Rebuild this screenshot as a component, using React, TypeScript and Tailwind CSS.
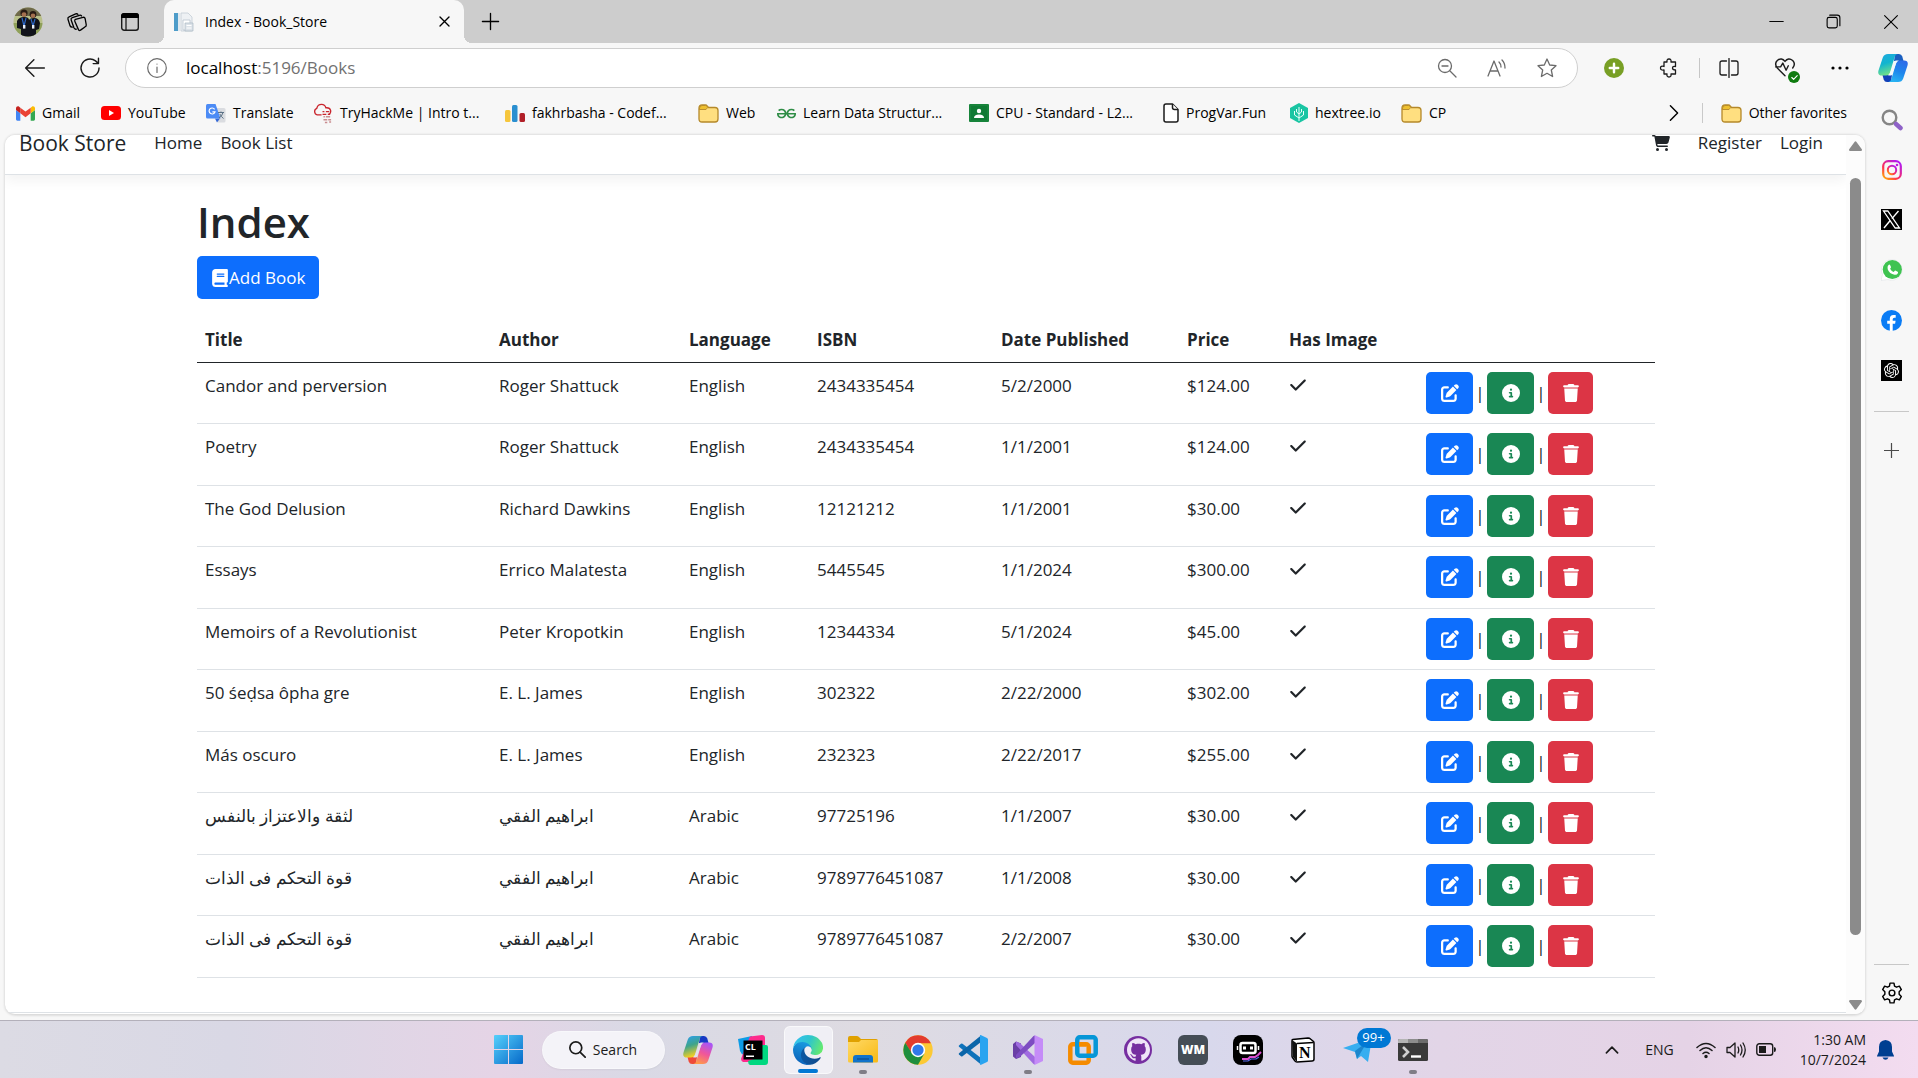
import React from "react";
import { FaBook, FaCartShopping, FaCheck, FaCircleInfo, FaPenToSquare, FaTrash } from "react-icons/fa6";
import { SiOpenai, SiGeeksforgeeks, SiGithub } from "react-icons/si";

type Book = {
  title: string;
  author: string;
  language: string;
  isbn: string;
  date: string;
  price: string;
};

const books: Book[] = [
  { title: "Candor and perversion", author: "Roger Shattuck", language: "English", isbn: "2434335454", date: "5/2/2000", price: "$124.00" },
  { title: "Poetry", author: "Roger Shattuck", language: "English", isbn: "2434335454", date: "1/1/2001", price: "$124.00" },
  { title: "The God Delusion", author: "Richard Dawkins", language: "English", isbn: "12121212", date: "1/1/2001", price: "$30.00" },
  { title: "Essays", author: "Errico Malatesta", language: "English", isbn: "5445545", date: "1/1/2024", price: "$300.00" },
  { title: "Memoirs of a Revolutionist", author: "Peter Kropotkin", language: "English", isbn: "12344334", date: "5/1/2024", price: "$45.00" },
  { title: "50 śeḍsa ôpha gre", author: "E. L. James", language: "English", isbn: "302322", date: "2/22/2000", price: "$302.00" },
  { title: "Más oscuro", author: "E. L. James", language: "English", isbn: "232323", date: "2/22/2017", price: "$255.00" },
  { title: "لثقة والاعتزاز بالنفس", author: "ابراهيم الفقي", language: "Arabic", isbn: "97725196", date: "1/1/2007", price: "$30.00" },
  { title: "قوة التحكم فى الذات", author: "ابراهيم الفقي", language: "Arabic", isbn: "9789776451087", date: "1/1/2008", price: "$30.00" },
  { title: "قوة التحكم فى الذات", author: "ابراهيم الفقي", language: "Arabic", isbn: "9789776451087", date: "2/2/2007", price: "$30.00" },
];

type SvgProps = React.SVGProps<SVGSVGElement>;

function Line({ children, size = 20, sw = 1.3, ...rest }: { children: React.ReactNode; size?: number; sw?: number } & SvgProps) {
  return (
    <svg width={size} height={size} viewBox="0 0 20 20" fill="none" stroke="currentColor" strokeWidth={sw} strokeLinecap="round" strokeLinejoin="round" aria-hidden="true" {...rest}>
      {children}
    </svg>
  );
}

/* ---------- Browser icons ---------- */

const Avatar = () => (
  <svg width="30" height="30" viewBox="0 0 30 30" aria-hidden="true">
    <defs><clipPath id="av"><circle cx="15" cy="15" r="14.5" /></clipPath></defs>
    <g clipPath="url(#av)">
      <rect width="30" height="30" fill="#b9c08a" />
      <rect width="30" height="9" fill="#6f6a4a" />
      <rect y="16" width="30" height="14" fill="#8fa05a" />
      <circle cx="11" cy="6" r="3.6" fill="#2a1c14" />
      <circle cx="11" cy="7.6" r="2.4" fill="#a5714f" />
      <circle cx="20" cy="7.5" r="3.4" fill="#2a1c14" />
      <circle cx="20" cy="8.8" r="2.3" fill="#a5714f" />
      <path d="M4 14q2-4 7-4t5 3q1-2 5-2 5 0 6 5l-1 6-3 1v8H8v-9l-4-1z" fill="#11131a" />
      <path d="M9 11l2 8 2-8M18 12l2 7 2-7" stroke="#2d66c4" strokeWidth="1.2" fill="none" />
      <rect x="10" y="18" width="2.4" height="3.6" fill="#e8eef6" />
      <rect x="19" y="18" width="2.4" height="3.6" fill="#e8eef6" />
    </g>
  </svg>
);

const Workspaces = () => (
  <Line size={22} sw={1.2}>
    <path d="M8.6 7.600l6.800-1.800q1.600-.4 2 1.100l1 5.600q.3 1.500-1.200 2l-4 2.900q-1.500.9-2-.7L8 9.400q-.4-1.500.6-1.800z" />
    <path d="M9.400 16.500q-1.500.4-2.200-1.200L4.700 8.200q-.5-1.500 1-2.100l6.500-2.200q1.300-.4 1.900.6" />
    <path d="M5.800 14.600q-1.500.2-2.200-1.300L1.800 7.500q-.5-1.500 1-2.100l6-2.700q1.300-.5 2 .4" />
  </Line>
);

const TabActions = () => (
  <svg width="20" height="20" viewBox="0 0 20 20" aria-hidden="true">
    <rect x="1.7" y="1.7" width="16.600" height="16.600" rx="2.5" fill="none" stroke="#1b1b1b" strokeWidth="1.4" />
    <path d="M1 6V4q0-3 3-3h12q3 0 3 3v2z" fill="#000" />
    <path d="M6 6v12" stroke="#1b1b1b" strokeWidth="1.3" />
  </svg>
);

const Favicon = () => (
  <svg width="20" height="20" viewBox="0 0 20 20" aria-hidden="true">
    <rect x="0" y="1" width="4" height="18" fill="#4d9cc9" />
    <rect x="4" y="1" width="2" height="18" fill="#dfe9f0" />
    <path d="M7 1h7l4 4v14H7z" fill="#eef1f4" stroke="#c3cdd6" strokeWidth=".8" />
    <path d="M9 8h7v10H9z" fill="#fff" stroke="#b9c4ce" strokeWidth=".8" />
    <path d="M11 11h8v8h-8z" fill="#dce2e8" stroke="#aab7c3" strokeWidth=".7" />
    <path d="M12.5 13.500h5M12.500 16h5" stroke="#fff" />
  </svg>
);

const Folder = () => (
  <svg width="21" height="19" viewBox="0 0 21 19" className="shrink-0" aria-hidden="true">
    <path d="M1 4q0-3 3-3h3.500q1 0 1.700 1L10.500 3.500H17q3 0 3 3V15q0 3-3 3H4q-3 0-3-3z" fill="#ffdf80" stroke="#b5892a" strokeWidth="1.3" />
    <path d="M1.300 5.500q0-4 2.700-4h3.500q.8 0 1.500.8L9.700 3.500 8 5.500z" fill="#eec02f" stroke="#b5892a" strokeWidth=".9" />
  </svg>
);

const Gmail = () => (
  <svg width="19" height="15" viewBox="52 42 88 66" aria-hidden="true">
    <path fill="#4285f4" d="M58 108h14V74L52 59v43c0 3.320 2.690 6 6 6" />
    <path fill="#34a853" d="M120 108h14c3.320 0 6-2.690 6-6V59l-20 15" />
    <path fill="#fbbc04" d="M120 48v26l20-15v-8c0-7.420-8.470-11.650-14.400-7.200" />
    <path fill="#ea4335" d="M72 74V48l24 18 24-18v26L96 92" />
    <path fill="#c5221f" d="M52 51v8l20 15V48l-5.600-4.200c-5.940-4.450-14.400-.22-14.400 7.200" />
  </svg>
);

const YouTube = () => (
  <svg width="20" height="14" viewBox="0 0 20 14" aria-hidden="true">
    <rect width="20" height="14" rx="3.5" fill="#f00" />
    <path d="M8 4v6l5-3z" fill="#fff" />
  </svg>
);

const Translate = () => (
  <svg width="20" height="20" viewBox="0 0 20 20" aria-hidden="true">
    <path d="M9 5h9q1.500 0 1.500 1.500V18q0 1.500-1.500 1.500h-6z" fill="#dadce0" />
    <path d="M11 19.500l3-4H9z" fill="#3367d6" />
    <path d="M1.500 1h8l5 14.500h-13Q0 15.500 0 14V2.500Q0 1 1.500 1z" fill="#4c8bf5" />
    <path d="M8.600 6.300A3 3 0 1 0 9 8.800H6.400" stroke="#fff" strokeWidth="1.2" fill="none" />
    <path d="M12 9.500h6M15 8.500v1M17 9.500q-1 4-4 5.500M13.800 11q1.500 3 3.700 4.500" stroke="#5b7287" strokeWidth="1" fill="none" />
  </svg>
);

const TryHackMe = () => (
  <svg width="20" height="21" viewBox="0 0 21 21" fill="none" aria-hidden="true">
    <path d="M9 12H4.500A3.700 3.700 0 0 1 4 5q1-4 5-4 3.500 0 4.500 3.500 4-.5 5 2.700.5 3-2 4.300" stroke="#c9252d" strokeWidth="1.4" />
    <path d="M10 8.500h2m1.500 0H17M10 11.500h4m1.500 0H18" stroke="#c9252d" strokeWidth="1.3" />
    <path d="M11 14h1.500m1 0H18M11 17h4m1 0h3M12.500 20H15m2-.5h2" stroke="#c98d90" strokeWidth="1.5" />
  </svg>
);

const Codeforces = () => (
  <svg width="20" height="17" viewBox="0 0 20 17" aria-hidden="true">
    <rect x="0" y="5" width="5.5" height="12" rx="1.5" fill="#f6c63c" />
    <rect x="7" y="0" width="5.5" height="17" rx="1.5" fill="#2a8fd0" />
    <rect x="14.5" y="8" width="5.5" height="9" rx="1.5" fill="#b11f28" />
  </svg>
);

const Classroom = () => (
  <svg width="20" height="18" viewBox="0 0 20 18" aria-hidden="true">
    <rect width="20" height="18" rx="1" fill="#17843b" />
    <rect x="2" y="2" width="16" height="14" fill="#0f7a34" />
    <circle cx="10" cy="7" r="2.2" fill="#fff" />
    <path d="M5 14q0-3.500 5-3.500t5 3.500z" fill="#fff" />
  </svg>
);

const PageIcon = () => (
  <svg width="16" height="20" viewBox="0 0 16 20" fill="#fff" stroke="#1b1b1b" strokeWidth="1.5" strokeLinejoin="round" aria-hidden="true">
    <path d="M3 1h6.500L15 6.500V17q0 2-2 2H3q-2 0-2-2V3q0-2 2-2z" />
    <path d="M9.500 1v3.500q0 2 2 2H15" />
  </svg>
);

const Hextree = () => (
  <svg width="18" height="20" viewBox="0 0 18 20" aria-hidden="true">
    <path d="M9 0l9 5v10l-9 5-9-5V5z" fill="#19c5a3" />
    <path d="M9 18V4M9 15L4.500 12V8M9 15l4.500-3V8M9 11L6.500 9V6M9 11l2.500-2V6" stroke="#e9fffa" strokeWidth="1" fill="none" />
  </svg>
);

const Copilot = ({ size, id, rainbow = false }: { size: number; id: string; rainbow?: boolean }) => (
  <svg width={size} height={size} viewBox="0 0 30 30" aria-hidden="true">
    <defs>
      <linearGradient id={id + "a"} x1="0" y1="0" x2=".3" y2="1">
        <stop offset="0" stopColor={rainbow ? "#2a9df4" : "#1fa8e0"} />
        <stop offset=".5" stopColor={rainbow ? "#3fa48b" : "#12b5cf"} />
        <stop offset="1" stopColor={rainbow ? "#f5d022" : "#6fe08a"} />
      </linearGradient>
      <linearGradient id={id + "b"} x1=".7" y1="0" x2=".3" y2="1">
        <stop offset="0" stopColor={rainbow ? "#a855f7" : "#2d6be8"} />
        <stop offset=".5" stopColor={rainbow ? "#f0569a" : "#1e86ec"} />
        <stop offset="1" stopColor={rainbow ? "#ff9b4a" : "#28b4f2"} />
      </linearGradient>
    </defs>
    <path d="M17 1h4q2.500 0 3.300 2.500L25.500 8H16z" fill={rainbow ? "#1739c4" : "#1a5fc0"} />
    <path d="M13 29H9q-2.500 0-3.300-2.500L4.500 22H14z" fill={rainbow ? "#ee4a3a" : "#1240b8"} />
    <path d="M10 1h9.500q-2 0-2.800 2.800L12 19.500Q11 22.500 8 22.500H4Q-.8 22.500.5 17.500L4.800 4.500Q6 1 10 1z" fill={`url(#${id}a)`} />
    <path d="M20 29h-9.500q2 0 2.800-2.800L18 10.500Q19 7.500 22 7.500h4q4.800 0 3.500 5L25.200 25.500Q24 29 20 29z" fill={`url(#${id}b)`} />
    <path d="M17.500 7.500h3.500q-2.300.5-3 3L13.500 22.500H9.500q2-.5 2.700-3z" fill={rainbow ? "#e4e0ea" : "#f2f8fb"} />
  </svg>
);

const InstagramMark = () => (
  <svg width="20" height="20" viewBox="0 0 20 20" fill="none" aria-hidden="true">
    <defs>
      <linearGradient id="ig" x1="0" y1="1" x2=".8" y2="0">
        <stop offset="0" stopColor="#ffb700" /><stop offset=".4" stopColor="#ff2f52" /><stop offset="1" stopColor="#b31bf0" />
      </linearGradient>
    </defs>
    <rect x="1.2" y="1.2" width="17.600" height="17.600" rx="5" stroke="url(#ig)" strokeWidth="2.2" />
    <circle cx="10" cy="10" r="4.200" stroke="url(#ig)" strokeWidth="2" />
    <circle cx="15" cy="5" r="1.3" fill="#c01be0" />
  </svg>
);

const XMark = () => (
  <svg width="21" height="21" viewBox="0 0 21 21" aria-hidden="true">
    <rect width="21" height="21" fill="#000" />
    <path d="M2.500 2h4.300l11.700 17h-4.300z" fill="none" stroke="#fff" strokeWidth="1.3" />
    <path d="M17.500 2l-6.600 7.600M9.200 11.500L3 19" stroke="#fff" strokeWidth="1.4" />
  </svg>
);

const FacebookMark = () => (
  <svg width="21" height="21" viewBox="0 0 21 21" aria-hidden="true">
    <circle cx="10.500" cy="10.500" r="10.500" fill="#0a7cf5" />
    <path d="M8.800 21v-7.300H6.200v-3h2.600V8.800q0-3.900 3.700-3.900 1.300 0 2.200.2v2.700h-1.400q-1.600 0-1.600 1.500v1.400h2.900l-.5 3h-2.400V21z" fill="#fff" />
  </svg>
);

/* ---------- Taskbar icons ---------- */

const WindowsLogo = () => (
  <svg width="29" height="29" viewBox="0 0 29 29" aria-hidden="true">
    <defs><linearGradient id="win" gradientUnits="userSpaceOnUse" x1="0" y1="0" x2="29" y2="29"><stop offset="0" stopColor="#56d0fb" /><stop offset="1" stopColor="#0669c9" /></linearGradient></defs>
    <path d="M0 1q0-1 1-1h13v14H0zM15 0h13q1 0 1 1v13H15zM0 15h14v14H1q-1 0-1-1zM15 15h14v13q0 1-1 1H15z" fill="url(#win)" />
  </svg>
);

const CLion = () => (
  <svg width="30" height="30" viewBox="0 0 30 30" aria-hidden="true">
    <path d="M0 4l14-3 4 12-12 7q-3-1-4-4z" fill="#0d9ce6" />
    <path d="M12 1.500L24 0q3 0 3 3v12l-9 12H5q-2-1-2-3l3-8z" fill="#fe2a8c" />
    <path d="M24 10h4q2 0 2 2v15q0 3-3 3H12q-2-1-2-4l12-4z" fill="#00d880" />
    <rect x="5.5" y="5.5" width="19" height="19" fill="#000" />
    <text x="7" y="14.5" fontSize="9" fontWeight="700" fill="#fff" fontFamily="Open Sans, sans-serif">CL</text>
    <rect x="8" y="20.5" width="8" height="1.5" fill="#fff" />
  </svg>
);

const Edge = () => (
  <svg width="30" height="30" viewBox="0 0 256 256" aria-hidden="true">
    <defs>
      <linearGradient id="e1" x1="0" y1="0" x2="1" y2="0"><stop offset="0" stopColor="#0c59a4" /><stop offset="1" stopColor="#114a8b" /></linearGradient>
      <linearGradient id="e2" x1=".6" y1="0" x2=".3" y2="1"><stop offset="0" stopColor="#1b9de2" /><stop offset="1" stopColor="#0a5fb8" /></linearGradient>
      <linearGradient id="e3" x1="0" y1=".3" x2="1" y2=".6"><stop offset="0" stopColor="#35c1f1" /><stop offset=".5" stopColor="#2fc5cc" /><stop offset="1" stopColor="#66eb6e" /></linearGradient>
    </defs>
    <path fill="url(#e1)" d="M231 190.500c-3.400 1.800-6.900 3.400-10.500 4.700a101 101 0 0 1-35.900 6.500c-47.300 0-88.500-32.500-88.500-74.300a31.500 31.500 0 0 1 16.400-27.300c-42.800 1.800-53.800 46.400-53.800 72.500 0 73.900 68.100 81.400 82.800 81.400 7.900 0 19.800-2.300 27-4.600l1.300-.4a128.300 128.300 0 0 0 66.600-52.800 4 4 0 0 0-5.400-5.700z" />
    <path fill="url(#e2)" d="M105.700 241.400a79.200 79.200 0 0 1-22.700-21.300 80.700 80.700 0 0 1 29.500-120c3.200-1.500 8.500-4.200 15.600-4.100a32.400 32.400 0 0 1 25.700 13 31.900 31.900 0 0 1 6.300 18.700c0-.2 24.500-79.600-80-79.600C36.200 48.100.1 89.700.1 126.300a130.200 130.200 0 0 0 12.100 56 128 128 0 0 0 156.400 67.100 75.500 75.500 0 0 1-62.800-8z" />
    <path fill="url(#e3)" d="M152.300 148.900c-.8 1-3.300 2.500-3.300 5.700 0 2.600 1.700 5.100 4.700 7.300 14.500 10 41.700 8.700 41.800 8.700a59.900 59.900 0 0 0 30.500-8.500 61.800 61.800 0 0 0 30.400-53.200c.3-22.400-8-37.300-11.300-43.900C223.900 23.900 177.700 0 128 0A128 128 0 0 0 0 126.200c.5-36.500 36.800-66 80-66 3.500 0 23.500.3 42 10.100 16.300 8.500 24.900 18.900 30.900 29.200 6.200 10.700 7.300 24.200 7.300 29.500s-2.700 13.300-7.900 19.900z" />
  </svg>
);

const Explorer = () => (
  <svg width="30" height="27" viewBox="0 0 30 27" aria-hidden="true">
    <defs><linearGradient id="fx" x1="0" y1="0" x2="1" y2="1"><stop offset="0" stopColor="#ffd966" /><stop offset="1" stopColor="#f8b913" /></linearGradient></defs>
    <path d="M0 2q0-2 2-2h7q1.500 0 2.500 1.500L13 3h15q2 0 2 2v4H0z" fill="#e0a100" />
    <path d="M0 6h11l2-2h17v21q0 1.500-1.500 1.500h-27Q0 26.500 0 25z" fill="url(#fx)" />
    <path d="M5 26.500V22q0-3 3-3h14q3 0 3 3v4.500z" fill="#1173ca" />
    <path d="M9 23h12" stroke="#0b4f91" strokeWidth="1.3" />
  </svg>
);

const Chrome = () => (
  <svg width="30" height="30" viewBox="0 0 48 48" aria-hidden="true">
    <circle cx="24" cy="24" r="23.500" fill="#fcc934" />
    <path d="M24 .5A23.500 23.500 0 0 0 3.600 12.300L14 30l10-6V13h20.500A23.500 23.500 0 0 0 24 .5z" fill="#e33b2e" />
    <path d="M3.600 12.300A23.500 23.500 0 0 0 24 47.500L34 30 24 24l-9.500 5.500z" fill="#1e8e3e" />
    <circle cx="24" cy="24" r="11.500" fill="#fff" />
    <circle cx="24" cy="24" r="9" fill="#3179ea" />
  </svg>
);

const VSCode = () => (
  <svg width="30" height="30" viewBox="0 0 30 30" aria-hidden="true">
    <path d="M1 10.500l2-1.800q.7-.6 1.500 0L23 23v6.500L1 11.800q-.6-.7 0-1.300z" fill="#0f72ba" />
    <path d="M1 19.500l2 1.800q.7.600 1.500 0L23 7V.5L1 18.200q-.6.700 0 1.300z" fill="#0b65a9" />
    <path d="M22 .3q.5-.4 1.200 0L29 3q1 .5 1 1.500v21q0 1-1 1.500l-5.800 2.700q-.7.300-1.200-.1z" fill="#2aa4f0" />
  </svg>
);

const VisualStudio = () => (
  <svg width="30" height="30" viewBox="0 0 30 30" aria-hidden="true">
    <path d="M0 9l3-2.500 5 2V22l-5 2L0 21.500z" fill="#6a3fa6" />
    <path d="M3 6.500l4 1.800L22 22v7.500L20.500 29 3 10z" fill="#a06be0" />
    <path d="M3 23.500l4-1.800L22 8V.5L20.500 1 3 20z" fill="#7d4cc2" />
    <path d="M21.500 0L30 4v22l-8.500 4z" fill="#c58cf8" />
  </svg>
);

const VMware = () => (
  <svg width="30" height="30" viewBox="0 0 30 30" fill="none" strokeWidth="4.5" aria-hidden="true">
    <rect x="2.300" y="9.300" width="18.400" height="18.400" rx="2.5" stroke="#f58b00" />
    <rect x="9.300" y="2.300" width="18.400" height="18.400" rx="2.5" stroke="#0696d7" />
    <path d="M11 9.300h7" stroke="#f58b00" />
  </svg>
);

const GithubMark = () => (
  <span className="flex size-7 items-center justify-center rounded-full bg-[#762ea0]">
    <SiGithub size={23} color="#efe4f7" />
  </span>
);

const Robot = () => (
  <svg width="30" height="30" viewBox="0 0 30 30" aria-hidden="true">
    <rect width="30" height="30" rx="8" fill="#000" />
    <path d="M7.500 10q0-2 2-2h11q2 0 2 2v6q0 2-2 2h-11q-2 0-2-2z" fill="none" stroke="#fff" strokeWidth="2.5" />
    <path d="M4.500 11v4M25.500 11v4" stroke="#fff" strokeWidth="1.5" />
    <rect x="10" y="11.5" width="3" height="3" fill="#fff" /><rect x="17" y="11.5" width="3" height="3" fill="#fff" />
    <path d="M9 24h6l2-2h5l3-2 3-3" fill="none" stroke="#d94fd0" strokeWidth="2" />
    <path d="M10 26h5l3-2h5l3-2" fill="none" stroke="#5a6ff0" strokeWidth="1.2" />
  </svg>
);

const Notion = () => (
  <svg width="24" height="26" viewBox="0 0 24 26" aria-hidden="true">
    <path d="M1.500 2.500L17 1q1.500 0 2.500 1l3 2.500q.5.5.5 1.500v16q0 2-2 2L6 25q-1.500 0-2-1l-2.500-3.500Q1 20 1 19V4q0-1.500.5-1.500z" fill="#fff" stroke="#000" strokeWidth="1.5" />
    <path d="M1 3l5 3.500V25l-4-5z" fill="#111" />
    <path d="M6 6.500L22.500 5.500" stroke="#000" strokeWidth="1.5" />
    <text x="8" y="21" fontSize="16" fontWeight="700" fill="#000" fontFamily="Liberation Serif, serif">N</text>
  </svg>
);

const Telegram = () => (
  <svg width="30" height="24" viewBox="0 0 30 24" aria-hidden="true">
    <path d="M0 10L29 0l-4 24-7-6-4 3-2-7z" fill="#37aef0" />
    <path d="M12 13L24 4l-10 17z" fill="#1c86cc" />
  </svg>
);

const Terminal = () => (
  <svg width="30" height="22" viewBox="0 0 30 22" aria-hidden="true">
    <rect width="30" height="22" rx="1.5" fill="#3a3a3a" />
    <path d="M0 4V1.500Q0 0 1.500 0H10v4z" fill="#b5b5b5" /><path d="M10 0h10v4H10z" fill="#8d8d8d" /><path d="M20 0h8.500Q30 0 30 1.500V4H20z" fill="#6c6c6c" />
    <path d="M5 8l5 5-5 5" fill="none" stroke="#d0d0d0" strokeWidth="2.6" />
    <path d="M13 17.500h10" stroke="#fff" strokeWidth="2.4" />
  </svg>
);

/* ---------- Sections ---------- */

function TitleBar() {
  return (
    <header className="flex h-[43px] items-stretch bg-[#cdcdcd]">
      <div className="flex w-[164px] shrink-0 items-center pl-[13px]">
        <button aria-label="Profile"><Avatar /></button>
        <button aria-label="Workspaces" className="ml-[23px]"><Workspaces /></button>
        <button aria-label="Tab actions" className="ml-8"><TabActions /></button>
      </div>
      <div className="relative flex w-[300px] items-center rounded-t-[10px] bg-[#f7f7f7] pl-[10px] text-sm text-black">
        <span className="absolute bottom-0 -left-2 size-2 bg-[radial-gradient(circle_at_0_0,#cdcdcd_8px,#f7f7f7_8px)]" />
        <span className="absolute bottom-0 -right-2 size-2 bg-[radial-gradient(circle_at_100%_0,#cdcdcd_8px,#f7f7f7_8px)]" />
        <Favicon />
        <span className="ml-[11px] flex-1 whitespace-nowrap">Index - Book_Store</span>
        <button aria-label="Close tab" className="mr-3"><Line size={15} sw={1.8}><path d="M4 4l12 12M16 4L4 16" /></Line></button>
      </div>
      <button aria-label="New tab" className="ml-[17px]"><Line size={19} sw={1.4}><path d="M10 1.500v17M1.500 10h17" /></Line></button>
      <div className="ml-auto flex items-center gap-[42px] pr-[19px]">
        <button aria-label="Minimize"><Line size={15}><path d="M1 10h18" /></Line></button>
        <button aria-label="Restore"><Line size={15} sw={1.5}><rect x="1.500" y="4.500" width="13.500" height="14" rx="2.5" /><path d="M5 1.500h10q3.500 0 3.500 3.500v10.500" /></Line></button>
        <button aria-label="Close window"><Line size={16} sw={1.4}><path d="M2 2l16 16M18 2L2 18" /></Line></button>
      </div>
    </header>
  );
}

function Toolbar() {
  return (
    <div className="flex h-12 items-center pt-0.5 text-[#1b1b1b]">
      <button aria-label="Back" className="ml-6"><Line size={22}><path d="M18.500 10H1.500M9 2.500L1.500 10 9 17.500" /></Line></button>
      <button aria-label="Refresh" className="ml-[33px]"><Line size={22}><path d="M18.200 10A8.200 8.200 0 1 1 15 3.500l2.500 2.300M17.700 1.200v4.800h-4.800" /></Line></button>
      <div className="ml-6 flex h-10 flex-1 items-center rounded-full border border-[#cfcfcf] bg-white px-5 text-[#6b6b6b]">
        <Line className="mx-px shrink-0" sw={1.2}><circle cx="10" cy="10" r="9.300" /><path d="M10 9v5.500M10 6v.1" /></Line>
        <div className="ml-[18px] flex-1 whitespace-nowrap text-[17px] text-[#717171]"><span className="text-black">localhost</span>:5196/Books</div>
        <div className="flex items-center gap-[30px]">
          <button aria-label="Zoom"><Line><circle cx="8" cy="8" r="6.500" /><path d="M13 13l6 6M5 8h6" /></Line></button>
          <button aria-label="Read aloud"><Line><path d="M1 18L7 3l6 15M3 13h8M12 4q2 2 2 5M15 2q3 3 3 8" /></Line></button>
          <button aria-label="Add to favorites"><Line><path d="M10 1l2.700 6 6.300.7-4.700 4.300 1.300 6.500L10 15.300 4.400 18.500l1.300-6.500L1 7.700 7.300 7z" /></Line></button>
        </div>
      </div>
      <button aria-label="Extension" className="ml-[26px] flex size-5 items-center justify-center rounded-full bg-[#789f25] text-white"><Line size={14} sw={3.5}><path d="M10 4v12M4 10h12" /></Line></button>
      <button aria-label="Extensions" className="ml-[35px]"><Line><path d="M5 4h3q-.5-3 2-3t2 3h4.500v4.500q-3-.5-3 1.500t3 2V16H12q.5 3-2 3t-2-3H5v-4q-3.500.5-3.500-2T5 8.500z" /></Line></button>
      <span className="ml-5 h-5 w-px bg-[#c6c6c6]" />
      <button aria-label="Split screen" className="ml-[19px]"><Line><path d="M7.500 3H3Q1 3 1 5v10q0 2 2 2h4.500M12.500 3H17q2 0 2 2v10q0 2-2 2h-4.500M10 .5v19" /></Line></button>
      <button aria-label="Browser essentials" className="relative ml-[35px]">
        <Line size={22}><path d="M10 17L3 10Q0 6 3 3.200 7 0 10 4q3-4 7-.8 3 3 0 6.800M1.500 9h4.500l2-3.500 3 6.500 2-4" /></Line>
        <span className="absolute -right-1 -bottom-1 flex size-3 items-center justify-center rounded-full bg-[#0f7b0f] text-white"><Line size={9} sw={2.5}><path d="M4 10l4 4 8-8" /></Line></span>
      </button>
      <button aria-label="Settings and more" className="ml-[35px]"><svg width="18" height="4" aria-hidden="true"><circle cx="2" cy="2" r="1.600" /><circle cx="9" cy="2" r="1.600" /><circle cx="16" cy="2" r="1.600" /></svg></button>
      <button aria-label="Copilot" className="mr-[10px] ml-[29px]"><Copilot size={30} id="side" /></button>
    </div>
  );
}

const bookmarks = [
  { label: "Gmail", icon: <Gmail />, width: "w-[85px]" },
  { label: "YouTube", icon: <YouTube />, width: "w-[105px]" },
  { label: "Translate", icon: <Translate />, width: "w-[107px]" },
  { label: "TryHackMe | Intro t...", icon: <TryHackMe />, width: "w-[192px]" },
  { label: "fakhrbasha - Codef...", icon: <Codeforces />, width: "w-[193px]" },
  { label: "Web", icon: <Folder />, width: "w-[79px]" },
  { label: "Learn Data Structur...", icon: <SiGeeksforgeeks size={19} color="#2f8d46" />, width: "w-[192px]" },
  { label: "CPU - Standard - L2...", icon: <Classroom />, width: "w-[194px]" },
  { label: "ProgVar.Fun", icon: <PageIcon />, width: "w-[127px]" },
  { label: "hextree.io", icon: <Hextree />, width: "w-[111px]" },
  { label: "CP", icon: <Folder />, width: "w-[60px]" },
];

function FavoritesBar() {
  return (
    <nav aria-label="Favorites" className="flex h-11 items-center pl-4 text-sm text-black">
      {bookmarks.map((b) => (
        <a key={b.label} href="#" className={`flex shrink-0 items-center gap-[7px] whitespace-nowrap ${b.width}`}>
          {b.icon}
          <span>{b.label}</span>
        </a>
      ))}
      <button aria-label="More favorites" className="ml-auto"><Line size={18} sw={1.6}><path d="M6 2l8 8-8 8" /></Line></button>
      <span className="ml-[19px] h-5 w-px bg-[#c9c9c9]" />
      <a href="#" className="mr-[18px] ml-[18px] flex items-center gap-[7px] whitespace-nowrap"><Folder /><span>Other favorites</span></a>
    </nav>
  );
}

function Sidebar() {
  return (
    <aside className="flex w-[53px] shrink-0 flex-col items-center pt-[18px]">
      <div className="flex h-[272px] flex-col items-center justify-between">
        <button aria-label="Search">
          <svg width="22" height="22" viewBox="0 0 22 22" fill="none" aria-hidden="true"><circle cx="8.500" cy="8.500" r="6.800" stroke="#858585" strokeWidth="2.4" /><path d="M15 15l4.500 4" stroke="#8f62c8" strokeWidth="4.5" strokeLinecap="round" /></svg>
        </button>
        <a href="#" aria-label="Instagram"><InstagramMark /></a>
        <a href="#" aria-label="X"><XMark /></a>
        <a href="#" aria-label="WhatsApp">
          <svg width="22" height="22" viewBox="0 0 22 22" aria-hidden="true"><path d="M0 21.500l1.500-6A10.300 10.300 0 1 1 7 20.500z" fill="#fff" stroke="#dfe3e6" strokeWidth=".6" /><circle cx="11.300" cy="10.500" r="9.600" fill="#3fc351" /><path d="M7.500 6q1-1 1.700.2l.8 1.900q.2.5-.9 1.600 1.300 2.500 3.600 3.400l1.100-1.300q.4-.4 1 0l1.900 1q.6.400.2 1.400-1 1.800-3.300 1.500Q8.300 14.800 6.700 10.200 6 7.500 7.500 6z" fill="#fff" /></svg>
        </a>
        <a href="#" aria-label="Facebook"><FacebookMark /></a>
        <a href="#" aria-label="ChatGPT" className="flex size-[21px] items-center justify-center bg-black text-white"><SiOpenai size={15} /></a>
      </div>
      <hr className="mt-[30px] w-[35px] border-[#c8c8c8]" />
      <button aria-label="Customize" className="mt-[31px] text-[#4a4a4a]"><Line size={15} sw={1.6}><path d="M10 .5v19M.5 10h19" /></Line></button>
      <hr className="mt-auto w-[35px] border-[#c8c8c8]" />
      <button aria-label="Settings" className="mt-[17px] mb-4">
        <Line size={22}><circle cx="10" cy="10" r="2.600" /><path d="M8.200 1h3.600l.5 2.700 1.800 1 2.600-.9 1.800 3.100-2 1.900v2.400l2 1.900-1.800 3.100-2.600-.9-1.800 1-.5 2.700H8.200l-.5-2.700-1.800-1-2.600.9-1.800-3.100 2-1.900V8.800l-2-1.900 1.800-3.100 2.600.9 1.800-1z" /></Line>
      </button>
    </aside>
  );
}

function SiteHeader() {
  return (
    <header className="flex h-10 shrink-0 items-start border-b border-[#dee2e6] bg-white pr-[23px] pl-[14px] text-[17px] leading-4 shadow-[0_6px_12px_rgba(0,0,0,0.05)]">
      <a href="#" className="text-[21px]">Book Store</a>
      <nav className="ml-7 flex gap-[18px]">
        <a href="#">Home</a>
        <a href="#">Book List</a>
      </nav>
      <nav className="ml-auto flex items-start gap-[18px]">
        <a href="#" aria-label="Cart" className="mr-[10px] flex h-4 items-center"><FaCartShopping size={18} /></a>
        <a href="#">Register</a>
        <a href="#">Login</a>
      </nav>
    </header>
  );
}

const action = "flex h-[42px] items-center justify-center rounded-[5px] text-white";

function BookTable() {
  return (
    <table className="mt-4 w-full table-fixed border-collapse text-left text-[17px] leading-[27px]">
      <colgroup>
        <col className="w-[294px]" /><col className="w-[190px]" /><col className="w-[128px]" /><col className="w-[184px]" />
        <col className="w-[186px]" /><col className="w-[102px]" /><col className="w-[137px]" /><col className="w-[237px]" />
      </colgroup>
      <thead>
        <tr className="h-[47px] border-b border-[#212529]">
          {["Title", "Author", "Language", "ISBN", "Date Published", "Price", "Has Image"].map((h) => (
            <th key={h} scope="col" className="px-2 pt-[11px] pb-2 font-bold whitespace-nowrap">{h}</th>
          ))}
          <th aria-label="Actions" />
        </tr>
      </thead>
      <tbody>
        {books.map((b, i) => (
          <tr key={i} className="h-[61px] border-b border-[#dee2e6] align-top even:h-[62px]">
            <td className="px-2 pt-[9px]">{b.title}</td>
            <td className="px-2 pt-[9px]">{b.author}</td>
            <td className="px-2 pt-[9px]">{b.language}</td>
            <td className="px-2 pt-[9px]">{b.isbn}</td>
            <td className="px-2 pt-[9px]">{b.date}</td>
            <td className="px-2 pt-[9px]">{b.price}</td>
            <td className="px-2 pt-[9px]"><span className="flex h-[27px] items-center"><FaCheck size={18} aria-label="Yes" /></span></td>
            <td className="px-2 pt-[9px]">
              <div className="flex items-center">
                <a href="#" aria-label="Edit" className={`${action} w-[47px] bg-[#0d6efd]`}><FaPenToSquare size={18} /></a>
                <span className="w-[14px] text-center">|</span>
                <a href="#" aria-label="Details" className={`${action} w-[47px] bg-[#198754]`}><FaCircleInfo size={18} /></a>
                <span className="w-[14px] text-center">|</span>
                <a href="#" aria-label="Delete" className={`${action} w-[45px] bg-[#dc3545]`}><FaTrash size={18} /></a>
              </div>
            </td>
          </tr>
        ))}
      </tbody>
    </table>
  );
}

function WebPage() {
  return (
    <div className="ml-[5px] flex flex-1 overflow-hidden rounded-[10px] border-b border-[#dcdcdc] bg-white text-[#212529] shadow-[0_0_3px_rgba(0,0,0,0.2)]">
      <div className="flex flex-1 flex-col overflow-hidden">
        <SiteHeader />
        <main className="mx-auto w-full max-w-[1485px] flex-1 px-3.5 pt-5">
          <h1 className="text-[42px] leading-[54px] font-semibold">Index</h1>
          <a href="#" className="mt-[7px] inline-flex h-[43px] items-center rounded-[5px] bg-[#0d6efd] px-3.5 text-[17px] text-white"><FaBook size={18} />Add Book</a>
          <BookTable />
        </main>
        <div className="mb-px border-t border-[#dee2e6]" />
      </div>
      <div className="flex w-[19px] shrink-0 flex-col items-center bg-[#fcfcfc] text-[#8b8b8b]">
        <svg width="13" height="10" className="mt-1.5" fill="currentColor" aria-hidden="true"><path d="M5.500 1q1-1.400 2 0L13 8.500Q13 10 12 10H1Q0 10 0 8.500z" /></svg>
        <div className="mt-[27px] mb-[65px] w-[11px] flex-1 rounded-full bg-[#8b8b8b]" />
        <svg width="13" height="10" className="mb-1" fill="currentColor" aria-hidden="true"><path d="M5.500 9q1 1.400 2 0L13 1.500Q13 0 12 0H1Q0 0 0 1.500z" /></svg>
      </div>
    </div>
  );
}

const apps: { name: string; icon: React.ReactNode; active?: boolean; running?: boolean; badge?: string }[] = [
  { name: "Copilot", icon: <Copilot size={30} id="task" rainbow /> },
  { name: "CLion", icon: <CLion /> },
  { name: "Edge", icon: <Edge />, active: true },
  { name: "File Explorer", icon: <Explorer />, running: true },
  { name: "Chrome", icon: <Chrome /> },
  { name: "Visual Studio Code", icon: <VSCode /> },
  { name: "Visual Studio", icon: <VisualStudio />, running: true },
  { name: "VMware", icon: <VMware /> },
  { name: "GitHub Desktop", icon: <GithubMark /> },
  { name: "WM", icon: <span className="flex size-[30px] items-center justify-center rounded-md bg-[#454d56] text-xs font-extrabold text-white">WM</span> },
  { name: "Assistant", icon: <Robot /> },
  { name: "Notion", icon: <Notion /> },
  { name: "Telegram", icon: <Telegram />, badge: "99+" },
  { name: "Terminal", icon: <Terminal />, running: true },
];

function Taskbar() {
  return (
    <footer className="flex h-[58px] shrink-0 items-center border-t border-[#b3b0ba] bg-[linear-gradient(90deg,#dcdbe4_0%,#d9d8e5_12%,#e5d4e6_26%,#d9d9e5_33%,#dedbe2_45%,#d8d8ec_63%,#e2d5e7_75%,#e5d3e6_88%,#f3dcf0_100%)] text-[#1b1b1b]">
      <div className="flex-1 pl-10" />
      <div className="flex items-center">
        <button aria-label="Start" className="mr-[19px]"><WindowsLogo /></button>
        <button className="mr-1.5 flex h-[38px] w-[123px] items-center justify-center gap-[7px] rounded-full border border-white/40 bg-[#f4f3f8] text-sm shadow-xs">
          <Line size={17} sw={2}><circle cx="8" cy="8" r="7" /><path d="M13 13l6 6" /></Line>
          Search
        </button>
        {apps.map((a) => (
          <button key={a.name} aria-label={a.name} className={`relative mx-[3px] flex h-12 w-[49px] items-center justify-center rounded-md ${a.active ? "border border-white/60 bg-[#f0eff5]" : ""}`}>
            {a.icon}
            {a.active && <span className="absolute bottom-0 h-1 w-5 rounded-full bg-[#0078d4]" />}
            {a.running && <span className="absolute bottom-0 h-1 w-2 rounded-full bg-[#7f7d86]" />}
            {a.badge && <span className="absolute top-0.5 left-[23px] flex h-5 w-[34px] items-center justify-center rounded-full bg-[#0078d4] text-[13px] text-white">{a.badge}</span>}
          </button>
        ))}
      </div>
      <div className="flex flex-1 items-center justify-end pr-6 text-sm">
        <button aria-label="Show hidden icons"><Line size={14} sw={2.4}><path d="M2 14l8-8 8 8" /></Line></button>
        <button className="ml-[26px]">ENG</button>
        <button aria-label="Network, sound and battery" className="ml-[22px] flex items-center gap-[10px]">
          <Line sw={1.5}><path d="M1 7.500q9-8 18 0M4 10.500q6-5.500 12 0M7 13.500q3-2.500 6 0" /><circle cx="10" cy="16.500" r="1" fill="currentColor" /></Line>
          <Line><path d="M1 7.500v5h3l5 4.500V3L4 7.500zM12 7q1.500 3 0 6M14.500 5q3 5 0 10M17 3q4.500 7 0 14" /></Line>
          <svg width="20" height="13" viewBox="0 0 20 13" aria-hidden="true"><rect x=".8" y=".8" width="15.900" height="11.400" rx="2.5" fill="none" stroke="#1b1b1b" strokeWidth="1.4" /><rect x="3" y="3" width="7" height="7" fill="#1b1b1b" /><path d="M18 4q2 0 2 2.500T18 9z" fill="#1b1b1b" /></svg>
        </button>
        <button className="ml-6 text-right leading-5"><span className="block">1:30 AM</span><span className="block">10/7/2024</span></button>
        <button aria-label="Notifications" className="ml-[11px]">
          <svg width="17" height="20" viewBox="0 0 17 20" fill="#003f91" aria-hidden="true"><path d="M8.500 0Q15 .5 15 7v4.500l2 4.500v.5H0V16l2-4.500V7Q2 .5 8.500 0zM5.500 17.500h6q-1 2.200-3 2.200t-3-2.200z" /></svg>
        </button>
      </div>
    </footer>
  );
}

export default function App() {
  return (
    <div className="flex min-h-screen flex-col bg-[#f7f7f7] font-['Open_Sans','Noto_Sans',sans-serif]">
      <TitleBar />
      <Toolbar />
      <div className="flex flex-1">
        <div className="flex flex-1 flex-col">
          <FavoritesBar />
          <WebPage />
          <div className="h-[5px]" />
        </div>
        <Sidebar />
      </div>
      <Taskbar />
    </div>
  );
}
